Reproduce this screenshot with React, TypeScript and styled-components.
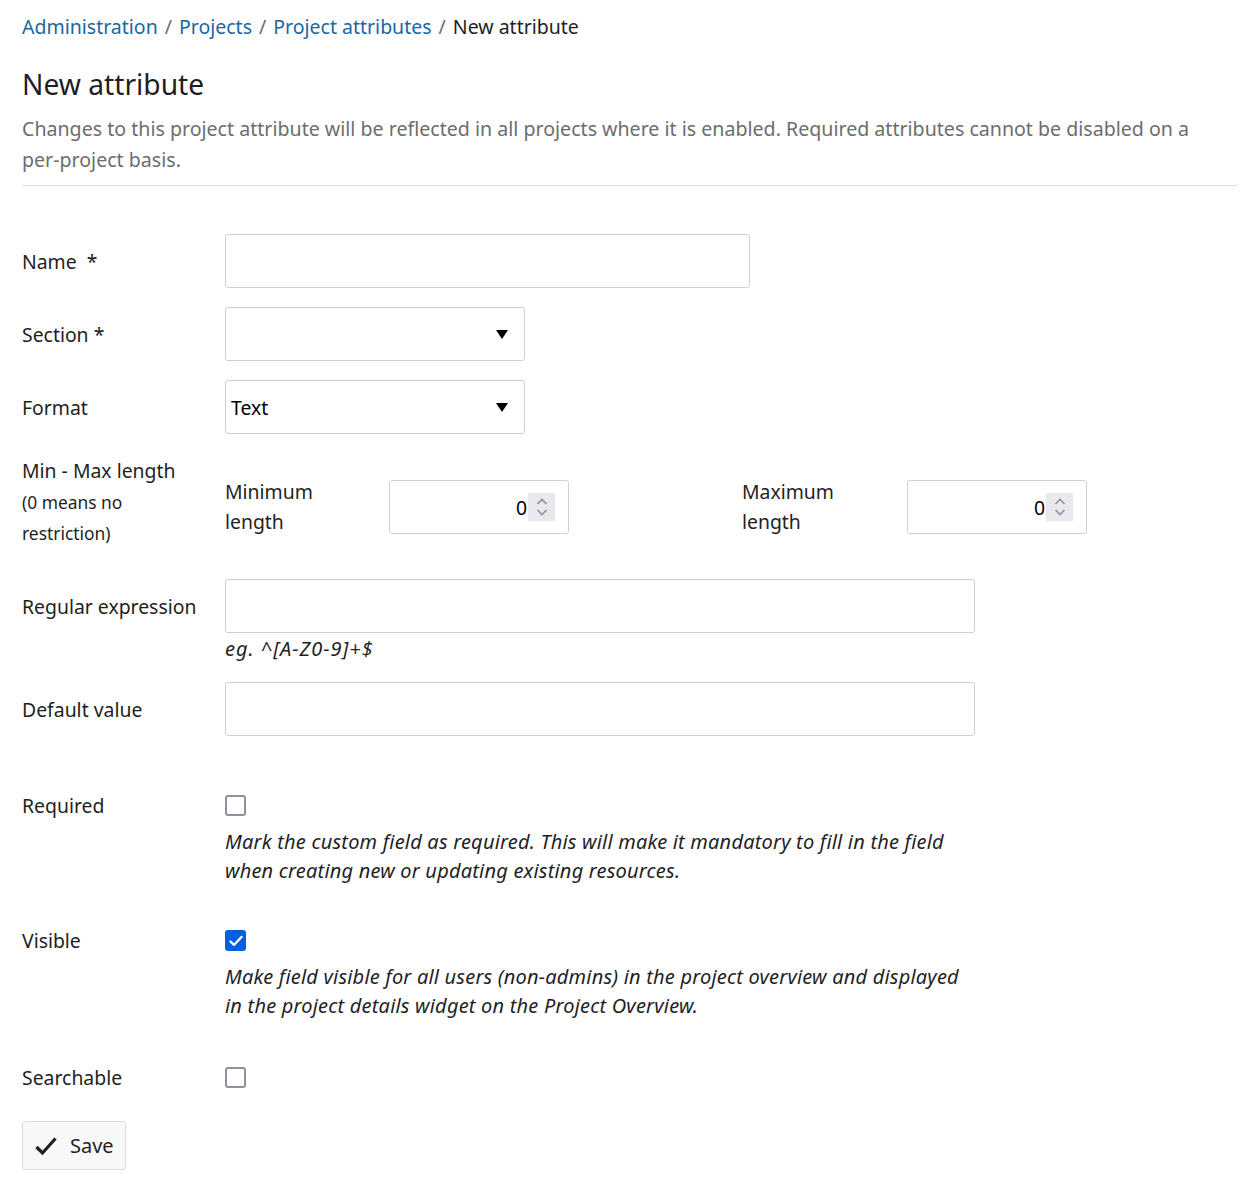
import React from "react";
import styled, { createGlobalStyle } from "styled-components";

const Global = createGlobalStyle`
  * { box-sizing: border-box; }
  body {
    margin: 0;
    background: #fff;
    font-family: "Noto Sans", "Open Sans", sans-serif;
    color: #1f1f1f;
  }
`;

const Page = styled.div`
  padding: 12px 6px 20px 22px;
`;

const Breadcrumb = styled.nav`
  display: flex;
  align-items: center;
  gap: 7px;
  font-size: 19.5px;
  line-height: 30px;
`;

const Crumb = styled.a`
  color: #1a67a3;
  text-decoration: none;
`;

const Sep = styled.span`
  color: #6d6d6d;
`;

const Current = styled.span`
  color: #1f1f1f;
`;

const Title = styled.h2`
  margin: 22px 0 0;
  font-size: 28.2px;
  font-weight: 400;
  line-height: 40px;
`;

const Description = styled.p`
  margin: 9px 0 0;
  font-size: 19.6px;
  line-height: 31px;
  color: #6d6d6d;
  padding-bottom: 10px;
  border-bottom: 1px solid #dcdcdc;
`;

const Form = styled.form`
  display: flex;
  flex-direction: column;
  padding-top: 48px;
  gap: 19px;
`;

const Row = styled.div<{ $mt?: number }>`
  display: grid;
  grid-template-columns: 203px 1fr;
  align-items: start;
  margin-top: ${(p) => p.$mt ?? 0}px;
`;

const Label = styled.label<{ $pt?: number }>`
  font-size: 19.4px;
  line-height: 30px;
  padding-top: ${(p) => p.$pt ?? 13}px;
  color: #1f1f1f;
`;

const SmallNote = styled.span`
  display: block;
  max-width: 150px;
  font-size: 17.4px;
  line-height: 31px;
  margin-top: 1px;
`;

const Field = styled.div`
  display: flex;
  flex-direction: column;
`;

const TextInput = styled.input<{ $w: number }>`
  width: ${(p) => p.$w}px;
  height: 54px;
  border: 1px solid #cdd1d8;
  border-radius: 3px;
  font: inherit;
  font-size: 19px;
  padding: 0 6px;
  outline: none;
`;

const SelectBox = styled.div`
  position: relative;
  width: 300px;
  height: 54px;
  border: 1px solid #cdd1d8;
  border-radius: 3px;
  display: flex;
  align-items: center;
  padding: 0 5px;
  font-size: 19.4px;
  color: #000;
`;

const Arrow = styled.svg`
  position: absolute;
  right: 16px;
  top: 22px;
`;

const MinMax = styled.div`
  display: grid;
  grid-template-columns: 164px 180px 173px 165px 180px;
  align-items: center;
  padding-top: 21px;
`;

const SubLabel = styled.span`
  font-size: 19.4px;
  line-height: 30px;
`;

const NumberBox = styled.div`
  width: 180px;
  height: 54px;
  border: 1px solid #cdd1d8;
  border-radius: 3px;
  display: flex;
  align-items: center;
  justify-content: flex-end;
  padding-right: 13px;
  font-size: 19.4px;
  color: #000;
  gap: 1px;
`;

const Spinner = styled.span`
  width: 27px;
  height: 28px;
  background: #e9e9ed;
  display: flex;
  align-items: center;
  justify-content: center;
`;

const Hint = styled.div`
  font-size: 20px;
  font-style: italic;
  letter-spacing: 1px;
  line-height: 30px;
  margin-top: 1px;
  color: #1f1f1f;
`;

const CheckCol = styled.div`
  display: flex;
  flex-direction: column;
`;

const Box = styled.span<{ $on?: boolean }>`
  margin-top: 4px;
  width: 21px;
  height: 21px;
  border-radius: 3px;
  border: ${(p) => (p.$on ? "none" : "2px solid #8f8f9d")};
  background: ${(p) => (p.$on ? "#0060df" : "#fff")};
  display: flex;
  align-items: center;
  justify-content: center;
`;

const CheckText = styled.p`
  margin: 11px 0 0;
  max-width: 750px;
  font-size: 20px;
  font-style: italic;
  letter-spacing: 0.2px;
  line-height: 29px;
  color: #1f1f1f;
`;

const SaveButton = styled.button`
  margin-top: 9px;
  align-self: flex-start;
  display: flex;
  align-items: center;
  gap: 13px;
  height: 49px;
  padding: 0 11px 0 12px;
  background: #f8f8f8;
  border: 1px solid #dddddd;
  border-radius: 3px;
  font: inherit;
  font-size: 20px;
  color: #1f1f1f;
`;

const Caret = () => (
  <Arrow width="12" height="9" viewBox="0 0 12 9">
    <path d="M0 0 L12 0 L6 9 Z" fill="#000" />
  </Arrow>
);

const Spin = () => (
  <Spinner>
    <svg width="14" height="22" viewBox="0 0 14 22">
      <path d="M2.5 8 L7 3.5 L11.5 8" fill="none" stroke="#8f8f9d" strokeWidth="1.6" />
      <path d="M2.5 14 L7 18.5 L11.5 14" fill="none" stroke="#8f8f9d" strokeWidth="1.6" />
    </svg>
  </Spinner>
);

export default function App() {
  return (
    <Page>
      <Global />
      <Breadcrumb>
        <Crumb href="#">Administration</Crumb>
        <Sep>/</Sep>
        <Crumb href="#">Projects</Crumb>
        <Sep>/</Sep>
        <Crumb href="#">Project attributes</Crumb>
        <Sep>/</Sep>
        <Current>New attribute</Current>
      </Breadcrumb>
      <Title>New attribute</Title>
      <Description>
        Changes to this project attribute will be reflected in all projects where it is enabled.
        Required attributes cannot be disabled on a per‑project basis.
      </Description>

      <Form onSubmit={(e) => e.preventDefault()}>
        <Row>
          <Label>Name&nbsp; *</Label>
          <TextInput $w={525} />
        </Row>
        <Row>
          <Label>Section *</Label>
          <SelectBox>
            <Caret />
          </SelectBox>
        </Row>
        <Row>
          <Label>Format</Label>
          <SelectBox>
            Text
            <Caret />
          </SelectBox>
        </Row>
        <Row $mt={3}>
          <Label $pt={0}>
            Min - Max length
            <SmallNote>(0 means no restriction)</SmallNote>
          </Label>
          <MinMax>
            <SubLabel>
              Minimum
              <br />
              length
            </SubLabel>
            <NumberBox>
              0<Spin />
            </NumberBox>
            <span />
            <SubLabel>
              Maximum
              <br />
              length
            </SubLabel>
            <NumberBox>
              0<Spin />
            </NumberBox>
          </MinMax>
        </Row>
        <Row $mt={11}>
          <Label>Regular expression</Label>
          <Field>
            <TextInput $w={750} />
            <Hint>eg. ^[A-Z0-9]+$</Hint>
          </Field>
        </Row>
        <Row $mt={-1}>
          <Label>Default value</Label>
          <TextInput $w={750} />
        </Row>
        <Row $mt={36}>
          <Label $pt={0}>Required</Label>
          <CheckCol>
            <Box />
            <CheckText>
              Mark the custom field as required. This will make it mandatory to fill in the field
              when creating new or updating existing resources.
            </CheckText>
          </CheckCol>
        </Row>
        <Row $mt={22}>
          <Label $pt={0}>Visible</Label>
          <CheckCol>
            <Box $on>
              <svg width="14" height="12" viewBox="0 0 14 12">
                <path d="M1.5 6.5 L5 10 L12.5 2" fill="none" stroke="#fff" strokeWidth="2.4" strokeLinecap="round" strokeLinejoin="round" />
              </svg>
            </Box>
            <CheckText>
              Make field visible for all users (non-admins) in the project overview and displayed in
              the project details widget on the Project Overview.
            </CheckText>
          </CheckCol>
        </Row>
        <Row $mt={24}>
          <Label $pt={0}>Searchable</Label>
          <CheckCol>
            <Box />
          </CheckCol>
        </Row>
        <SaveButton type="submit">
          <svg width="22" height="20" viewBox="0 0 22 20">
            <path d="M1.5 11 L7.5 17 L20.5 2.5" fill="none" stroke="#1f1f1f" strokeWidth="3.2" strokeLinejoin="miter" />
          </svg>
          Save
        </SaveButton>
      </Form>
    </Page>
  );
}
